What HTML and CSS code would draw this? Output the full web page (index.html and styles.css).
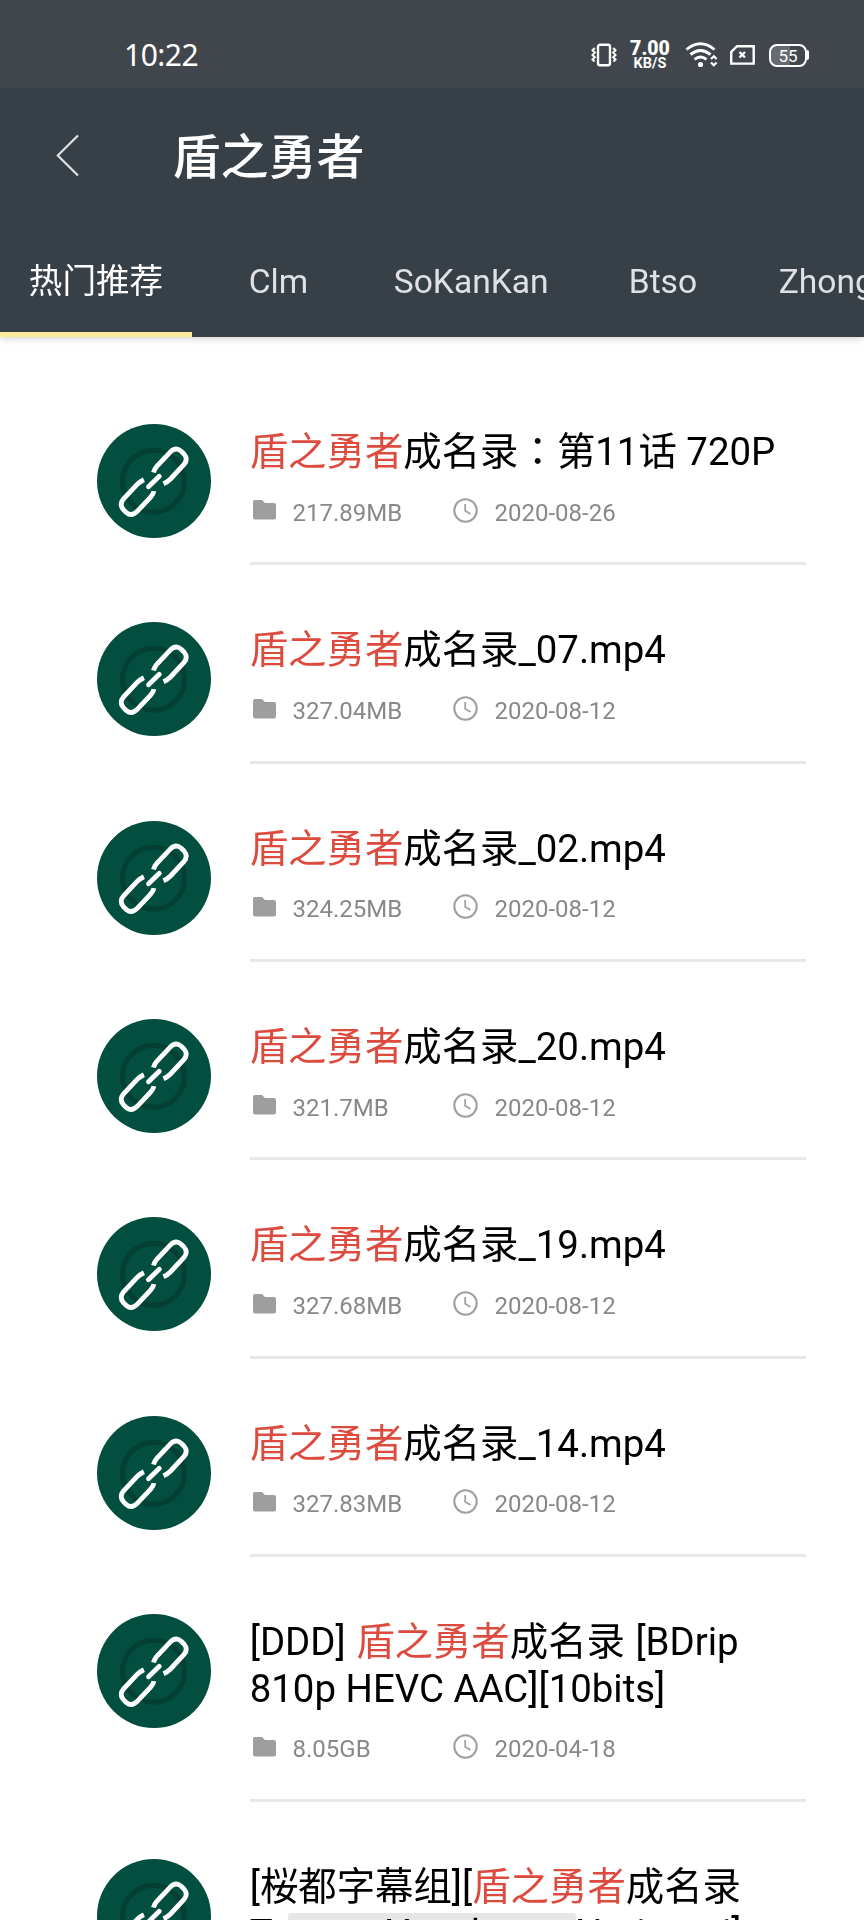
FILE: index.html
```html
<!DOCTYPE html>
<html lang="zh-CN">
<head>
<meta charset="utf-8">
<title>盾之勇者</title>
<link rel="stylesheet" href="styles.css">
</head>
<body>
<svg class="defs" aria-hidden="true">
  <symbol id="link" viewBox="0 0 114 114">
    <circle cx="57" cy="57" r="57" fill="#024e3f"/>
    <circle cx="56.5" cy="57.3" r="31" fill="none" stroke="#043f33" stroke-width="5"/>
    <g fill="none" stroke="#fff" stroke-width="4.8">
      <path d="M56.500 48.500Q57 45.500 60 42.200L73 28.400Q78.500 22.600 84 27L87 30Q91.500 35 87 40.500L73.500 55Q70.500 58 66.500 59.800"/>
      <path d="M56.500 48.500Q57 45.500 60 42.200L73 28.400Q78.500 22.600 84 27L87 30Q91.500 35 87 40.500L73.500 55Q70.500 58 66.500 59.800" transform="rotate(180 56.700 57.800)"/>
      <path d="M51.500 62.800L62.300 52.300" stroke-linecap="round"/>
    </g>
  </symbol>
  <symbol id="folder" viewBox="0 0 23 20">
    <path d="M2 0H9L12 3H21Q23 3 23 5V17.500Q23 19.500 21 19.500H2Q0 19.500 0 17.500V2Q0 0 2 0Z" fill="#9e9e9e"/>
  </symbol>
  <symbol id="clock" viewBox="0 0 25 25">
    <g fill="none" stroke="#a0a0a0" stroke-width="2.100">
      <circle cx="12.500" cy="12.500" r="11.200"/>
      <path d="M12.200 6V12.800L17.500 16" stroke-width="1.800"/>
    </g>
  </symbol>
</svg>
<div class="screen">
  <div class="status">
    <span class="time">10:22</span>
    <div class="indicators">
      <svg class="vibrate" width="26" height="24" viewBox="0 0 26 24" fill="none" stroke="#fff">
        <rect x="7" y="1.800" width="12" height="20.500" rx="2" stroke-width="2.400"/>
        <path d="M3.800 5L1.500 7.300L3.800 9.600L1.500 11.900L3.800 14.200L1.500 16.500L3.500 18.500M22.200 5L24.500 7.300L22.200 9.600L24.500 11.900L22.200 14.200L24.500 16.500L22.500 18.500" stroke-width="2"/>
      </svg>
      <div class="speed"><b>7.00</b><span>KB/S</span></div>
      <svg class="wifi" width="33" height="26" viewBox="0 0 33 26" fill="none" stroke="#fff">
        <path d="M1.500 7.500Q15.500 -4 29.500 7.500M5.500 12.500Q15.500 4.500 25.500 12.500M9.500 17.300Q15.500 12.500 21.500 17.300" stroke-width="2.900"/>
        <circle cx="15.500" cy="22.500" r="2.600" fill="#fff" stroke="none"/>
        <path d="M26 17L28.800 14.200L31.600 17M26 20.500L28.800 23.300L31.600 20.500" stroke-width="2.200"/>
      </svg>
      <svg class="sim" width="25" height="20" viewBox="0 0 25 20" fill="none" stroke="#fff">
        <path d="M7 1.200H23.700V18.600H1.200V7Z" stroke-width="2.400"/>
        <path d="M9.500 7L15 12.500M15 7L9.500 12.500" stroke-width="2.400"/>
      </svg>
      <div class="battery"><span class="cell">55</span><span class="tip"></span></div>
    </div>
  </div>
  <header class="header">
    <div class="bar">
      <svg class="back" width="24" height="43" viewBox="0 0 24 43" fill="none" stroke="#e0e2e4" stroke-width="2.200"><path d="M22 1.500L1.800 21.500L22 41.500"/></svg>
      <h1 class="title">盾之勇者</h1>
    </div>
    <nav class="tabs">
      <a class="tab active">热门推荐</a><a class="tab">Clm</a><a class="tab sokan">SoKanKan</a><a class="tab btso">Btso</a><a class="tab">Zhongzi</a>
    </nav>
  </header>
  <main class="list">
    <article class="item"><svg class="avatar"><use href="#link"/></svg><div class="body"><h2><em>盾之勇者</em>成名录<span class="colon" lang="zh-TW">：</span>第11话 720P</h2><div class="meta"><svg class="folder"><use href="#folder"/></svg><span class="size">217.89MB</span><svg class="clock"><use href="#clock"/></svg><span>2020-08-26</span></div></div></article>
    <article class="item"><svg class="avatar"><use href="#link"/></svg><div class="body"><h2><em>盾之勇者</em>成名录_07.mp4</h2><div class="meta"><svg class="folder"><use href="#folder"/></svg><span class="size">327.04MB</span><svg class="clock"><use href="#clock"/></svg><span>2020-08-12</span></div></div></article>
    <article class="item"><svg class="avatar"><use href="#link"/></svg><div class="body"><h2><em>盾之勇者</em>成名录_02.mp4</h2><div class="meta"><svg class="folder"><use href="#folder"/></svg><span class="size">324.25MB</span><svg class="clock"><use href="#clock"/></svg><span>2020-08-12</span></div></div></article>
    <article class="item"><svg class="avatar"><use href="#link"/></svg><div class="body"><h2><em>盾之勇者</em>成名录_20.mp4</h2><div class="meta"><svg class="folder"><use href="#folder"/></svg><span class="size">321.7MB</span><svg class="clock"><use href="#clock"/></svg><span>2020-08-12</span></div></div></article>
    <article class="item"><svg class="avatar"><use href="#link"/></svg><div class="body"><h2><em>盾之勇者</em>成名录_19.mp4</h2><div class="meta"><svg class="folder"><use href="#folder"/></svg><span class="size">327.68MB</span><svg class="clock"><use href="#clock"/></svg><span>2020-08-12</span></div></div></article>
    <article class="item"><svg class="avatar"><use href="#link"/></svg><div class="body"><h2><em>盾之勇者</em>成名录_14.mp4</h2><div class="meta"><svg class="folder"><use href="#folder"/></svg><span class="size">327.83MB</span><svg class="clock"><use href="#clock"/></svg><span>2020-08-12</span></div></div></article>
    <article class="item"><svg class="avatar"><use href="#link"/></svg><div class="body"><h2><span class="loose">[DDD] <em>盾之勇者</em>成名录 [BDrip</span><br>810p HEVC AAC][10bits]</h2><div class="meta"><svg class="folder"><use href="#folder"/></svg><span class="size">8.05GB</span><svg class="clock"><use href="#clock"/></svg><span>2020-04-18</span></div></div></article>
    <article class="item"><svg class="avatar"><use href="#link"/></svg><div class="body"><h2>[桜都字幕组][<em>盾之勇者</em>成名录<br>Tate no Yuusha no Nariagari]</h2></div></article>
  </main>
  <div class="gesture"></div>
</div>
</body>
</html>
```

FILE: styles.css
```css
* { box-sizing: border-box; }
body { margin: 0; background: #fff; font-family: Roboto, "Noto Sans CJK SC", sans-serif; }
.defs { position: absolute; width: 0; height: 0; }
.screen { position: relative; width: 864px; height: 1920px; overflow: hidden; background: #fff; }

.status { position: relative; z-index: 1; height: 88px; padding: 22px 55px 0 124px; display: flex; justify-content: space-between; align-items: center; background: #40464b; color: #fff; }
.time { font-family: "Noto Sans", sans-serif; font-size: 30px; line-height: 40px; letter-spacing: -0.5px; }
.indicators { display: flex; align-items: center; }
.speed { display: flex; flex-direction: column; align-items: center; width: 40px; margin: 1px 0 0 13px; font-weight: 700; }
.speed b { font-size: 19.500px; line-height: 16px; }
.speed span { font-size: 14.500px; line-height: 14px; }
.wifi { margin-left: 15px; }
.sim { margin-left: 12px; }
.battery { display: flex; align-items: center; margin-left: 14px; }
.cell { width: 38px; height: 23px; border: 2px solid #fff; border-radius: 8px; background: linear-gradient(90deg, #666b6f 55%, #40464b 55%); font-size: 17px; line-height: 20px; text-align: center; }
.tip { width: 2px; height: 10px; border-radius: 0 2px 2px 0; background: #fff; }

.header { position: relative; height: 249px; background: #384047; box-shadow: 0 1px 8px rgba(0, 0, 0, 0.2); }
.bar { height: 136px; display: flex; align-items: center; padding-left: 56px; }
.back { margin-top: -2px; }
.title { margin: 4px 0 0 92.500px; color: #fff; font-size: 48px; line-height: 60px; font-weight: 500; }
.tabs { display: flex; height: 113px; overflow: hidden; }
.tab { flex: none; margin-right: 28px; padding: 0 28.800px; line-height: 115px; font-size: 33.600px; color: #dfe1e4; }
.tab.sokan { margin-right: 22.500px; }
.tab.btso { margin-right: 24px; }
.tab.active { color: #fff; border-bottom: 5px solid #fdea9a; }

.list { padding-top: 30px; }
.item { display: flex; padding: 57px 58px 0 97px; }
.avatar { flex: none; width: 114px; height: 114px; margin-right: 39px; }
.body { flex: 1; min-width: 0; border-bottom: 3px solid #e8e8e8; }
h2 { margin: 5px 0 0 -0.300px; font-size: 38.400px; line-height: 46.800px; font-weight: 400; color: #000; white-space: nowrap; }
em { font-style: normal; color: #dc4b3e; }
.colon { font-family: "Noto Sans CJK TC", sans-serif; line-height: 0; }
.loose { word-spacing: 1px; }
.meta { display: flex; align-items: center; height: 28px; margin: 23px 0 35.530px; padding-left: 2.500px; font-size: 24px; line-height: 28px; color: #888; }
.folder { width: 23px; height: 20px; margin: -5px 17px 0 0; }
.size { width: 160px; }
.clock { width: 25px; height: 25px; margin: -5px 17px 0 0; }
.gesture { position: absolute; left: 288px; top: 1913px; width: 288px; height: 7px; border-radius: 3px 3px 0 0; background: #e6e6e6; mix-blend-mode: multiply; }
```
